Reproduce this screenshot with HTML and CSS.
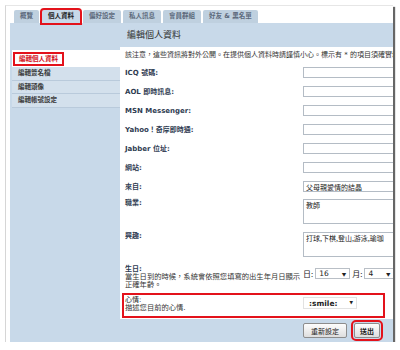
FILE: index.html
```html
<!DOCTYPE html>
<html lang="zh-TW">
<head>
	<meta charset="UTF-8">
	<title>編輯個人資料</title>
	<link rel="stylesheet" href="styles.css">
</head>
<body>
	<div id="shot">
		<ul id="tabs">
			<li>概覽</li>
			<li class="on mark">個人資料</li>
			<li>偏好設定</li>
			<li>私人訊息</li>
			<li>會員群組</li>
			<li>好友 &amp; 黑名單</li>
		</ul>
		<div id="panel">
			<ul id="menu">
				<li class="on"><span class="mark">編輯個人資料</span></li>
				<li>編輯簽名檔</li>
				<li>編輯頭像</li>
				<li>編輯帳號設定</li>
			</ul>
			<div id="main">
				<h2>編輯個人資料</h2>
				<div class="box">
					<p class="notice">該注意，這些資訊將對外公開。在提供個人資料時請謹慎小心。標示有 * 的項目須確實填寫。</p>
					<div class="row"><span class="label">ICQ 號碼:</span><input type="text"></div>
					<div class="row"><span class="label">AOL 即時訊息:</span><input type="text"></div>
					<div class="row"><span class="label">MSN Messenger:</span><input type="text"></div>
					<div class="row"><span class="label">Yahoo！奇摩即時通:</span><input type="text"></div>
					<div class="row"><span class="label">Jabber 位址:</span><input type="text"></div>
					<div class="row"><span class="label">網站:</span><input type="text"></div>
					<div class="row"><span class="label">來自:</span><input type="text" value="父母親愛情的結晶"></div>
					<div class="row tall"><span class="label">職業:</span><textarea>教師</textarea></div>
					<div class="row tall"><span class="label">興趣:</span><textarea>打球,下棋,登山,游泳,瑜珈</textarea></div>
					<div class="row birth">
						<span class="label">生日:<em>當生日到的時候，系統會依照您填寫的出生年月日顯示正確年齡。</em></span>
						<span class="date">
							日: <span class="sel day"><select><option>16</option></select></span>
							月: <span class="sel month"><select><option>4</option></select></span>
						</span>
					</div>
					<div class="row mood mark">
						<span class="label">心情:<em>描述您目前的心情.</em></span>
						<span class="sel smile"><select><option>:smile:</option></select></span>
					</div>
				</div>
				<div class="actions">
					<button type="reset">重新設定</button>
					<button type="submit" class="send mark">送出</button>
				</div>
			</div>
		</div>
	</div>
</body>
</html>
```

FILE: styles.css
```css
* {
	margin: 0;
	padding: 0;
	box-sizing: border-box;
}
body {
	background: #fff;
	font-family: "DejaVu Sans", "Noto Sans CJK TC", sans-serif;
	font-size: 7px;
	color: #333;
}
#shot {
	width: 388px;
	height: 337px;
	margin: 5px 0 0 5px;
	padding: 4px 0 0 4px;
	border-left: 1px solid #d6d6d6;
	border-top: 1px solid #e6e6e6;
	box-shadow: 2px 2px 1px rgba(0, 0, 0, 0.6);
	overflow: hidden;
	background: #fff;
}
.mark {
	outline: 2px solid #e3121b;
}

/* tabs */
#tabs {
	list-style: none;
	display: flex;
	gap: 2px;
	height: 13px;
	margin-left: 4px;
}
#tabs li {
	height: 13px;
	line-height: 13px;
	padding: 0 6px;
	font-size: 6.5px;
	font-weight: bold;
	color: #5d6a7c;
	background: #bfd0df;
	border-radius: 2px 2px 0 0;
}
#tabs li.on {
	margin: 0 1px;
	color: #222;
	background: #c8d9e9;
}

/* panel */
#panel {
	display: flex;
	height: 319px;
	background: #c8d9e9;
}
#menu {
	list-style: none;
	width: 110px;
	flex: none;
	padding-top: 27px;
}
#menu li {
	margin-left: 2px;
	height: 13.5px;
	line-height: 13px;
	padding-left: 6px;
	font-size: 6.5px;
	font-weight: bold;
	color: #3a3a3a;
	background: #d3e0ec;
	border-bottom: 1px solid #b9cadb;
}
#menu li.on {
	height: 17px;
	padding: 3px 0 0 3px;
	background: #fff;
	border-bottom: none;
}
#menu li.on span {
	display: inline-block;
	height: 10px;
	line-height: 10px;
	padding: 0 4px;
	color: #d3121c;
}
#main {
	flex: 1;
}
#main h2 {
	height: 24px;
	line-height: 24px;
	padding-left: 7px;
	font-size: 9px;
	font-weight: normal;
	color: #333;
	font-family: "Noto Sans CJK TC", sans-serif;
}
.box {
	height: 272px;
	background: #fff;
}
.notice {
	height: 16px;
	line-height: 16px;
	padding-left: 5px;
	white-space: nowrap;
	overflow: hidden;
	color: #333;
}

/* form rows */
.row {
	display: flex;
	align-items: center;
	height: 19px;
}
.label {
	width: 183px;
	flex: none;
	padding-left: 5px;
	font-weight: bold;
	color: #2f3c52;
	line-height: 8px;
}
.label em {
	display: block;
	font-style: normal;
	font-weight: normal;
	font-size: 7.3px;
	color: #333;
}
input,
textarea {
	width: 100px;
	flex: none;
	border: 1px solid #b4bcc5;
	background: #fff;
	font-family: "Noto Sans CJK TC", sans-serif;
	font-size: 7px;
	color: #222;
}
input {
	height: 11px;
	padding: 0 2px;
}
textarea {
	height: 25px;
	padding: 1px 2px;
	resize: none;
	line-height: 8px;
	overflow: hidden;
}
.row.tall {
	height: 32.5px;
	align-items: flex-start;
	padding-top: 3px;
}
.row.birth {
	height: 29px;
	align-items: flex-start;
	padding-top: 4px;
}
.date {
	display: flex;
	align-items: center;
	gap: 2px;
	margin-top: 3px;
	font-size: 8px;
	font-family: "Noto Sans CJK TC", sans-serif;
	color: #222;
}
.sel {
	position: relative;
	display: inline-block;
	flex: none;
}
.sel select {
	appearance: none;
	-webkit-appearance: none;
	display: block;
	height: 11px;
	padding: 0 3px;
	border: 1px solid #b9bfc6;
	background: #fff;
	font-family: "DejaVu Sans", sans-serif;
	font-size: 7.5px;
	color: #222;
}
.sel::after {
	content: "\25BC";
	position: absolute;
	right: 4px;
	top: 3px;
	font-size: 4.5px;
	color: #222;
	pointer-events: none;
}
.day select {
	width: 35px;
}
.month select {
	width: 30px;
}
.mood {
	height: 21px;
	margin: 5px 30px 0 4px;
	align-items: flex-start;
}
.mood .label {
	width: 179px;
	padding-left: 1px;
	padding-top: 1px;
	font-weight: normal;
	color: #222;
}
.smile {
	margin-top: 2px;
}
.smile select {
	width: 54px;
	height: 12px;
	padding-left: 5px;
	font-weight: bold;
	border-color: #e2e2e2;
}

/* buttons */
.actions {
	display: flex;
	gap: 7px;
	padding: 4px 0 0 183px;
}
.actions button {
	height: 15px;
	border: 1px solid #8d8d8d;
	border-radius: 2px;
	background: linear-gradient(#fdfdfd, #dedede);
	font-family: "Noto Sans CJK TC", sans-serif;
	font-size: 7px;
	color: #222;
	width: 44px;
}
.actions .send {
	width: 26px;
	font-weight: bold;
	outline-offset: 1px;
}
```
